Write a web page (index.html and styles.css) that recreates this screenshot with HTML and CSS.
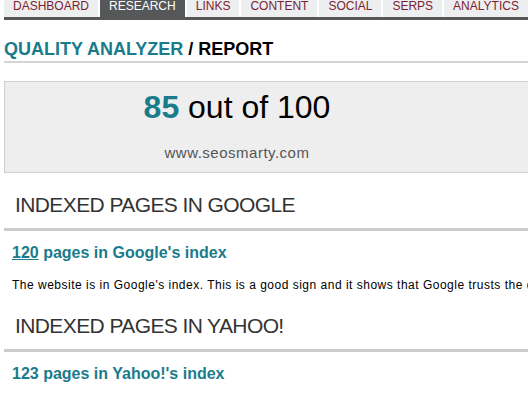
FILE: index.html
```html
<!DOCTYPE html>
<html lang="en">
<head>
    <meta charset="UTF-8">
    <title>Quality Analyzer / Report</title>
    <link rel="stylesheet" href="styles.css">
</head>
<body>
    <div class="page">
        <ul class="nav">
            <li><a href="#">Dashboard</a></li>
            <li class="active"><a href="#">Research</a></li>
            <li><a href="#">Links</a></li>
            <li><a href="#">Content</a></li>
            <li><a href="#">Social</a></li>
            <li><a href="#">Serps</a></li>
            <li><a href="#">Analytics</a></li>
            <li><a href="#">Settings</a></li>
        </ul>

        <h1 class="page-title"><span class="crumb">Quality Analyzer</span> / Report</h1>

        <div class="score-box">
            <div class="score-inner">
                <div class="score"><span class="score-value">85</span> out of 100</div>
                <div class="score-site">www.seosmarty.com</div>
            </div>
        </div>

        <div class="section">
            <h2>Indexed pages in Google</h2>
            <h3><a href="#">120</a> pages in Google's index</h3>
            <p>The website is in Google's index. This is a good sign and it shows that Google trusts the domain enough to keep its pages in the index.</p>
        </div>

        <div class="section">
            <h2>Indexed pages in Yahoo!</h2>
            <h3>123 pages in Yahoo!'s index</h3>
            <p>The website is in Yahoo!'s index. This is a good sign as well.</p>
        </div>
    </div>
</body>
</html>
```

FILE: styles.css
```css
body {
    margin: 0;
    font-family: "Liberation Sans", Arial, sans-serif;
    background-color: #ffffff;
    overflow: hidden;
}
.page {
    width: 800px;
    padding: 0 0 0 4px;
}
.nav {
    list-style: none;
    margin: 0;
    padding: 0;
    display: flex;
    border-bottom: 3px solid #555759;
}
.nav li {
    border-right: 2px solid #ffffff;
}
.nav a {
    display: block;
    height: 17px;
    line-height: 13px;
    padding: 0 9px 0 9px;
    background-color: #eceef0;
    color: #7b1f2e;
    font-size: 12px;
    text-transform: uppercase;
    text-decoration: none;
}
.nav .active a {
    background-color: #555759;
    color: #ffffff;
}
.page-title {
    margin: 19px 0 0 0;
    padding-bottom: 2px;
    border-bottom: 2px solid #d4d4d4;
    font-size: 18px;
    line-height: 20px;
    text-transform: uppercase;
    color: #000000;
}
.page-title .crumb {
    color: #1a7b8c;
}
.score-box {
    margin-top: 18px;
    height: 90px;
    background-color: #eeeeee;
    border: 1px solid #cfcfcf;
}
.score-inner {
    width: 464px;
    text-align: center;
}
.score {
    padding-top: 7px;
    font-size: 32px;
    line-height: 36px;
    color: #000000;
}
.score-value {
    font-weight: bold;
    color: #1a7b8c;
}
.score-site {
    margin-top: 19px;
    font-size: 15px;
    line-height: 18px;
    letter-spacing: 0.5px;
    color: #555555;
}
.section {
    padding-top: 19px;
}
.section + .section {
    padding-top: 21px;
}
.section h2 {
    margin: 0;
    padding: 0 0 10px 11px;
    border-bottom: 3px solid #cccccc;
    font-size: 21px;
    line-height: 26px;
    letter-spacing: -0.6px;
    font-weight: normal;
    text-transform: uppercase;
    color: #333333;
}
.section h3 {
    margin: 13px 0 0 8px;
    font-size: 16px;
    line-height: 18px;
    color: #1a7b8c;
}
.section h3 a {
    color: #1a7b8c;
}
.section p {
    margin: 16px 0 0 8px;
    font-size: 12px;
    line-height: 14px;
    letter-spacing: 0.5px;
    white-space: nowrap;
    color: #000000;
}
```
